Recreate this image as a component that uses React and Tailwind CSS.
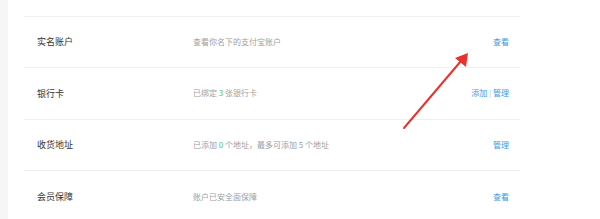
import React from "react";

const font = { fontFamily: '"Noto Sans CJK SC", "Liberation Sans", sans-serif' };

function Row({ label, desc, action, last }) {
  return (
    <div className={`flex shrink-0 items-center h-[51.5px] pl-[13px] pr-[11px] ${last ? "" : "border-b border-[#efefef]"}`}>
      <div className="w-[156px] text-[9px] text-[#333]">{label}</div>
      <div className="flex-1 text-[8px] text-[#a0a0a0]">{desc}</div>
      <div className="text-[8px] text-[#3b9ae1]">{action}</div>
    </div>
  );
}

export default function App() {
  return (
    <div className="relative w-[600px] h-[219px] bg-white overflow-hidden flex" style={font}>
      <div className="w-[8px] bg-[#f6f6f6]" />
      <div className="ml-[16px] w-[496px] flex flex-col">
        <div className="h-[16.5px] shrink-0 border-b border-[#efefef]" />
        <Row label="实名账户" desc="查看你名下的支付宝账户" action="查看" />
        <Row
          label="银行卡"
          desc={<>已绑定 <span className="text-[#4cc36a]">3</span> 张银行卡</>}
          action={<>添加 <span className="text-[#bbb]">|</span> 管理</>}
        />
        <Row
          label="收货地址"
          desc={<>已添加 <span className="text-[#4cc36a]">0</span> 个地址，最多可添加 5 个地址</>}
          action="管理"
        />
        <Row label="会员保障" desc="账户已安全面保障" action="查看" last />
      </div>
      <svg className="absolute left-0 top-0" width="600" height="219" viewBox="0 0 600 219">
        <line x1="404" y1="128" x2="461" y2="61" stroke="#e8322d" strokeWidth="2" strokeLinecap="round" />
        <polygon points="468,53 466,67 455,58" fill="#e8322d" />
      </svg>
    </div>
  );
}
